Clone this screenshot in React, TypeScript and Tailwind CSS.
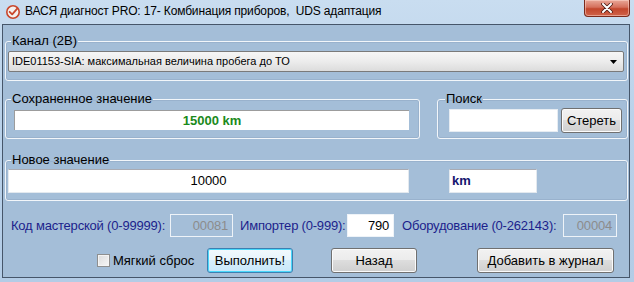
import React from 'react';

const GroupBox = ({
  label,
  className = '',
  legendClass = 'ml-[5px]',
  children,
}: {
  label: string;
  className?: string;
  legendClass?: string;
  children: React.ReactNode;
}) => (
  <fieldset className={`border border-[#f2f6fa] rounded-[3px] shadow-[inset_0_0_0_1px_rgba(120,145,170,0.25)] ${className}`}>
    <legend className={`text-[13px] leading-[14px] text-black px-[1px] ${legendClass}`}>{label}</legend>
    {children}
  </fieldset>
);

const btn =
  'h-[25px] rounded-[3px] border border-[#707070] bg-[linear-gradient(#f2f2f2,#ebebeb_50%,#dddddd_50%,#cfcfcf)] shadow-[inset_0_0_0_1px_#fbfbfb] text-[13px] text-black flex items-center justify-center';

const App = () => {
  return (
    <div className="w-[634px] h-[282px] overflow-hidden flex flex-col bg-[linear-gradient(180deg,#c9ddf0,#bad2ea_40%,#b3cce6)] font-['Liberation_Sans',Arial,sans-serif]">
      {/* title bar */}
      <div className="h-[24px] flex items-start shrink-0">
        <svg className="ml-[5px] mt-[4px]" width="16" height="16" viewBox="0 0 16 16">
          <circle cx="8" cy="8" r="6.2" fill="#f4f1ee" stroke="#c9472c" strokeWidth="1.6" />
          <path d="M4.6 7.8 L7.2 10.4 L12.2 4.6" fill="none" stroke="#c9472c" strokeWidth="1.8" strokeLinecap="round" strokeLinejoin="round" />
        </svg>
        <div className="ml-[4px] mt-[4px] text-[12px] leading-[14px] tracking-[-0.15px] text-black whitespace-pre">
          ВАСЯ диагност PRO: 17- Комбинация приборов,  UDS адаптация
        </div>
        <div className="ml-auto mr-[4px] w-[46px] h-[17px] rounded-b-[4px] border border-t-0 border-[#7a2a1c] bg-[linear-gradient(#e9a898,#d5705c_45%,#c2462c_55%,#d0634a)] shadow-[inset_0_0_0_1px_rgba(255,220,210,0.5)] flex items-center justify-center">
          <svg width="12" height="10" viewBox="0 0 12 10">
            <path d="M2 1 L10 9 M10 1 L2 9" stroke="#4a1a12" strokeWidth="3.6" strokeLinecap="round" />
            <path d="M2 1 L10 9 M10 1 L2 9" stroke="#ffffff" strokeWidth="2" strokeLinecap="round" />
          </svg>
        </div>
      </div>

      {/* client area */}
      <div className="ml-[2px] mr-[4px] h-[254px] shrink-0 border border-[#46566a] bg-[#a4bed8] flex flex-col">
        {/* Канал */}
        <GroupBox label="Канал (2B)" className="mt-[9px] ml-[2px] mr-[1px]">
          <div className="pt-[3px] pb-[8px] pl-[2px] pr-[3px]">
            <div className="h-[21px] w-[616px] rounded-[2px] border border-[#7a7a7a] bg-[linear-gradient(#f6f6f6,#ececec_50%,#dcdcdc)] flex items-center pl-[3px] pr-[5px]">
              <span className="text-[11px] text-black leading-none">IDE01153-SIA: максимальная величина пробега до ТО</span>
              <svg className="ml-auto" width="8" height="4" viewBox="0 0 8 4">
                <path d="M0 0 H7 L3.5 4 Z" fill="#000" />
              </svg>
            </div>
          </div>
        </GroupBox>

        {/* Сохраненное значение + Поиск */}
        <div className="mt-[11px] ml-[2px] flex">
          <GroupBox label="Сохраненное значение" className="w-[415px]">
            <div className="pt-[4px] pb-[7px] pl-[8px]">
              <div className="w-[395px] h-[20px] bg-white border-l border-t border-[#9c9c9c] flex items-center justify-center text-[13px] font-bold text-[#1b8a1b]">
                15000 km
              </div>
            </div>
          </GroupBox>
          <GroupBox label="Поиск" className="ml-[17px] w-[191px]" legendClass="ml-[7px]">
            <div className="pt-[2px] pb-[5px] pl-[11px] flex items-center">
              <div className="w-[109px] h-[23px] bg-white border border-[#e6ecf2]" />
              <div className={`${btn} ml-[3px] w-[61px] h-[23px]`}>Стереть</div>
            </div>
          </GroupBox>
        </div>

        {/* Новое значение */}
        <GroupBox label="Новое значение" className="mt-[14px] ml-[2px] mr-[1px]">
          <div className="pt-[2px] pb-[7px] pl-[2px] flex">
            <div className="w-[401px] h-[24px] bg-white border border-t-[#a9abb3] border-[#e3e9ef] flex items-center justify-center text-[13px] text-black">
              10000
            </div>
            <div className="ml-[40px] w-[88px] h-[24px] bg-white border border-t-[#a9abb3] border-[#e3e9ef] flex items-center pl-[2px] text-[13px] font-bold text-[#14146e]">
              km
            </div>
          </div>
        </GroupBox>

        {/* codes row */}
        <div className="mt-[13px] ml-[8px] h-[23px] flex items-center text-[13px] tracking-[-0.2px] text-[#1c1f8c] whitespace-nowrap">
          <span className="w-[159px]">Код мастерской (0-99999):</span>
          <div className="w-[63px] h-[23px] border border-[#eef3f8] flex items-center justify-end pr-[4px] text-[#8c8c8c]">
            00081
          </div>
          <span className="ml-[7px] w-[107px]">Импортер (0-999):</span>
          <div className="w-[47px] h-[23px] bg-white border border-[#eef3f8] flex items-center justify-end pr-[4px] text-black">
            790
          </div>
          <span className="ml-[8px] w-[161px]">Оборудование (0-262143):</span>
          <div className="w-[54px] h-[23px] border border-[#eef3f8] flex items-center justify-end pr-[4px] text-[#8c8c8c]">
            00004
          </div>
        </div>

        {/* buttons row */}
        <div className="mt-[11px] h-[25px] flex items-center">
          <div className="ml-[94px] w-[110px] flex items-center">
            <div className="w-[13px] h-[13px] border border-[#8e8f8f] bg-[linear-gradient(135deg,#dcdcdc,#f6f6f6)] shadow-[inset_0_0_0_1px_#f4f4f4]" />
            <span className="ml-[3px] text-[13px] text-black">Мягкий сброс</span>
          </div>
          <div className="w-[86px] h-[25px] rounded-[3px] border border-[#3c7fb1] bg-[linear-gradient(#f2f9fd,#e6f4fc_50%,#d6eefb_50%,#c9e8fa)] shadow-[inset_0_0_0_1px_#48d8fb] text-[13px] text-black flex items-center justify-center">
            Выполнить!
          </div>
          <div className={`${btn} ml-[38px] w-[86px]`}>Назад</div>
          <div className={`${btn} ml-[60px] w-[137px]`}>Добавить в журнал</div>
        </div>
      </div>
    </div>
  );
};

export default App;
